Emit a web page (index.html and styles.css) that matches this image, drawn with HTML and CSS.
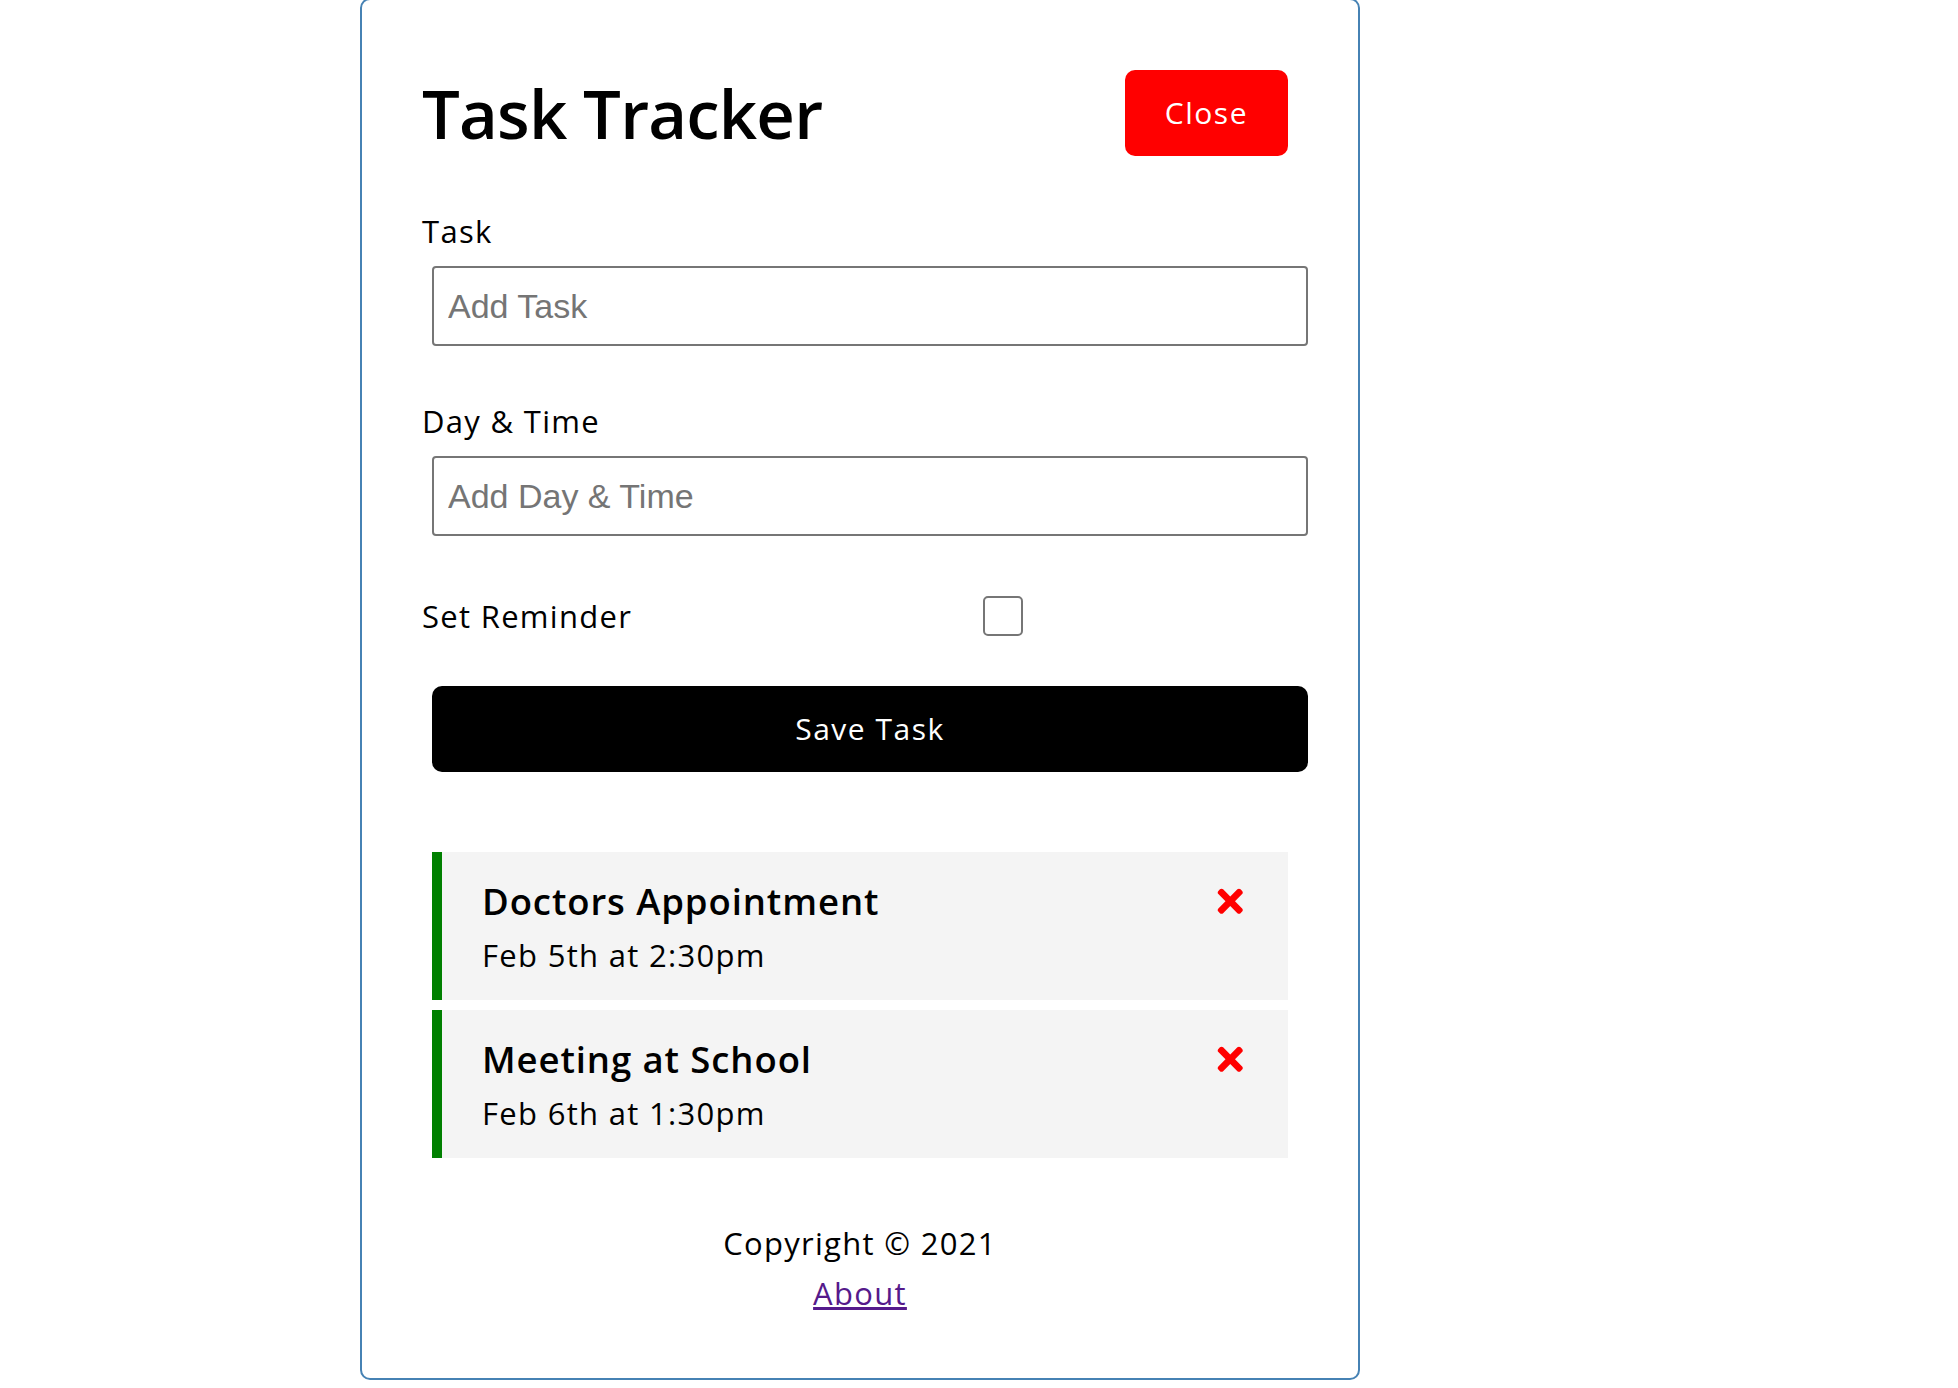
FILE: index.html
```html
<!DOCTYPE html>
<html lang="en">
<head>
<meta charset="utf-8">
<title>Task Tracker</title>
<link rel="stylesheet" href="styles.css">
</head>
<body>
<div class="container">
  <header class="header">
    <h1 class="title">Task Tracker</h1>
    <button class="btn btn-close">Close</button>
  </header>
  <form class="add-form">
    <div class="form-control">
      <label class="label">Task</label>
      <input class="text-input" type="text" placeholder="Add Task">
    </div>
    <div class="form-control">
      <label class="label">Day &amp; Time</label>
      <input class="text-input" type="text" placeholder="Add Day &amp; Time">
    </div>
    <div class="form-control form-control-check">
      <label class="label check-label">Set Reminder</label>
      <span class="check-wrap"><input class="check" type="checkbox"></span>
    </div>
    <button type="button" class="btn btn-block">Save Task</button>
  </form>
  <div class="tasks">
    <div class="task reminder">
      <h3 class="task-title">Doctors Appointment
        <svg class="times" viewBox="0 0 352 512" width="1em" height="1em"><path d="M242.72 256l100.07-100.07c12.28-12.28 12.28-32.19 0-44.48l-22.24-22.24c-12.28-12.28-32.19-12.28-44.48 0L176 189.28 75.93 89.21c-12.28-12.28-32.19-12.28-44.48 0L9.21 111.45c-12.28 12.28-12.28 32.19 0 44.48L109.28 256 9.21 356.07c-12.28 12.28-12.28 32.19 0 44.48l22.24 22.24c12.28 12.28 32.2 12.28 44.48 0L176 322.72l100.07 100.07c12.28 12.28 32.2 12.28 44.48 0l22.24-22.24c12.28-12.28 12.28-32.19 0-44.48L242.72 256z"/></svg>
      </h3>
      <p class="task-day">Feb 5th at 2:30pm</p>
    </div>
    <div class="task reminder">
      <h3 class="task-title">Meeting at School
        <svg class="times" viewBox="0 0 352 512" width="1em" height="1em"><path d="M242.72 256l100.07-100.07c12.28-12.28 12.28-32.19 0-44.48l-22.24-22.24c-12.28-12.28-32.19-12.28-44.48 0L176 189.28 75.93 89.21c-12.28-12.28-32.19-12.28-44.48 0L9.21 111.45c-12.28 12.28-12.28 32.19 0 44.48L109.28 256 9.21 356.07c-12.28 12.28-12.28 32.19 0 44.48l22.24 22.24c12.28 12.28 32.2 12.28 44.48 0L176 322.72l100.07 100.07c12.28 12.28 32.2 12.28 44.48 0l22.24-22.24c12.28-12.28 12.28-32.19 0-44.48L242.72 256z"/></svg>
      </h3>
      <p class="task-day">Feb 6th at 1:30pm</p>
    </div>
  </div>
  <footer class="footer">
    <p class="copy">Copyright &copy; 2021</p>
    <a class="about" href="#about">About</a>
  </footer>
</div>
</body>
</html>
```

FILE: styles.css
```css
* {
  box-sizing: border-box;
  margin: 0;
  padding: 0;
}

body {
  margin: 0;
  background: #fff;
  color: #000;
  font-family: "Open Sans", "Noto Sans", sans-serif;
  font-size: 31px;
  letter-spacing: 0.042em;
}

.container {
  width: 1000px;
  margin: -2px 0 0 360px;
  border: 2px solid steelblue;
  border-radius: 10px;
  padding: 60px;
}

.header {
  display: flex;
  justify-content: space-between;
  align-items: center;
  margin-bottom: 40px;
}

.title {
  font-size: 67px;
  line-height: 100px;
  font-weight: 600;
  letter-spacing: -0.012em;
}

.btn {
  display: inline-block;
  background: #000;
  color: #fff;
  border: none;
  padding: 20px 40px;
  margin: 10px;
  border-radius: 10px;
  font-family: inherit;
  font-size: 30px;
  line-height: 46px;
  letter-spacing: 0.05em;
}

.btn-close {
  background: #ff0000;
}

.btn-block {
  display: block;
  width: 100%;
}

.add-form {
  margin-bottom: 80px;
}

.form-control {
  display: flow-root;
  margin: 40px 0;
}

.label {
  display: block;
  line-height: 50px;
}

.text-input {
  display: block;
  width: 100%;
  height: 80px;
  margin: 10px;
  padding: 6px 14px;
  border: 2px solid #767676;
  border-radius: 4px;
  font-family: "Liberation Sans", Arial, sans-serif;
  font-size: 34px;
  letter-spacing: 0;
  color: #000;
  background: #fff;
}

.text-input::placeholder {
  color: #757575;
}

.form-control-check {
  display: flex;
  align-items: center;
}

.check-label {
  flex: 1;
}

.check-wrap {
  flex: 2;
  margin: 10px;
  display: flex;
  justify-content: center;
}

.check {
  appearance: none;
  -webkit-appearance: none;
  width: 40px;
  height: 40px;
  border: 2px solid #767676;
  border-radius: 5px;
  background: #fff;
}

.task {
  background: #f4f4f4;
  margin: 10px;
  padding: 20px 40px;
}

.task.reminder {
  border-left: 10px solid green;
}

.task-title {
  display: flex;
  align-items: center;
  justify-content: space-between;
  font-size: 36.5px;
  line-height: 58px;
  font-weight: 600;
  letter-spacing: 0.025em;
}

.times {
  fill: red;
  flex: none;
}

.task-day {
  line-height: 50px;
}

.footer {
  margin-top: 60px;
  text-align: center;
  line-height: 50px;
}

.about {
  color: #551a8b;
}
```
